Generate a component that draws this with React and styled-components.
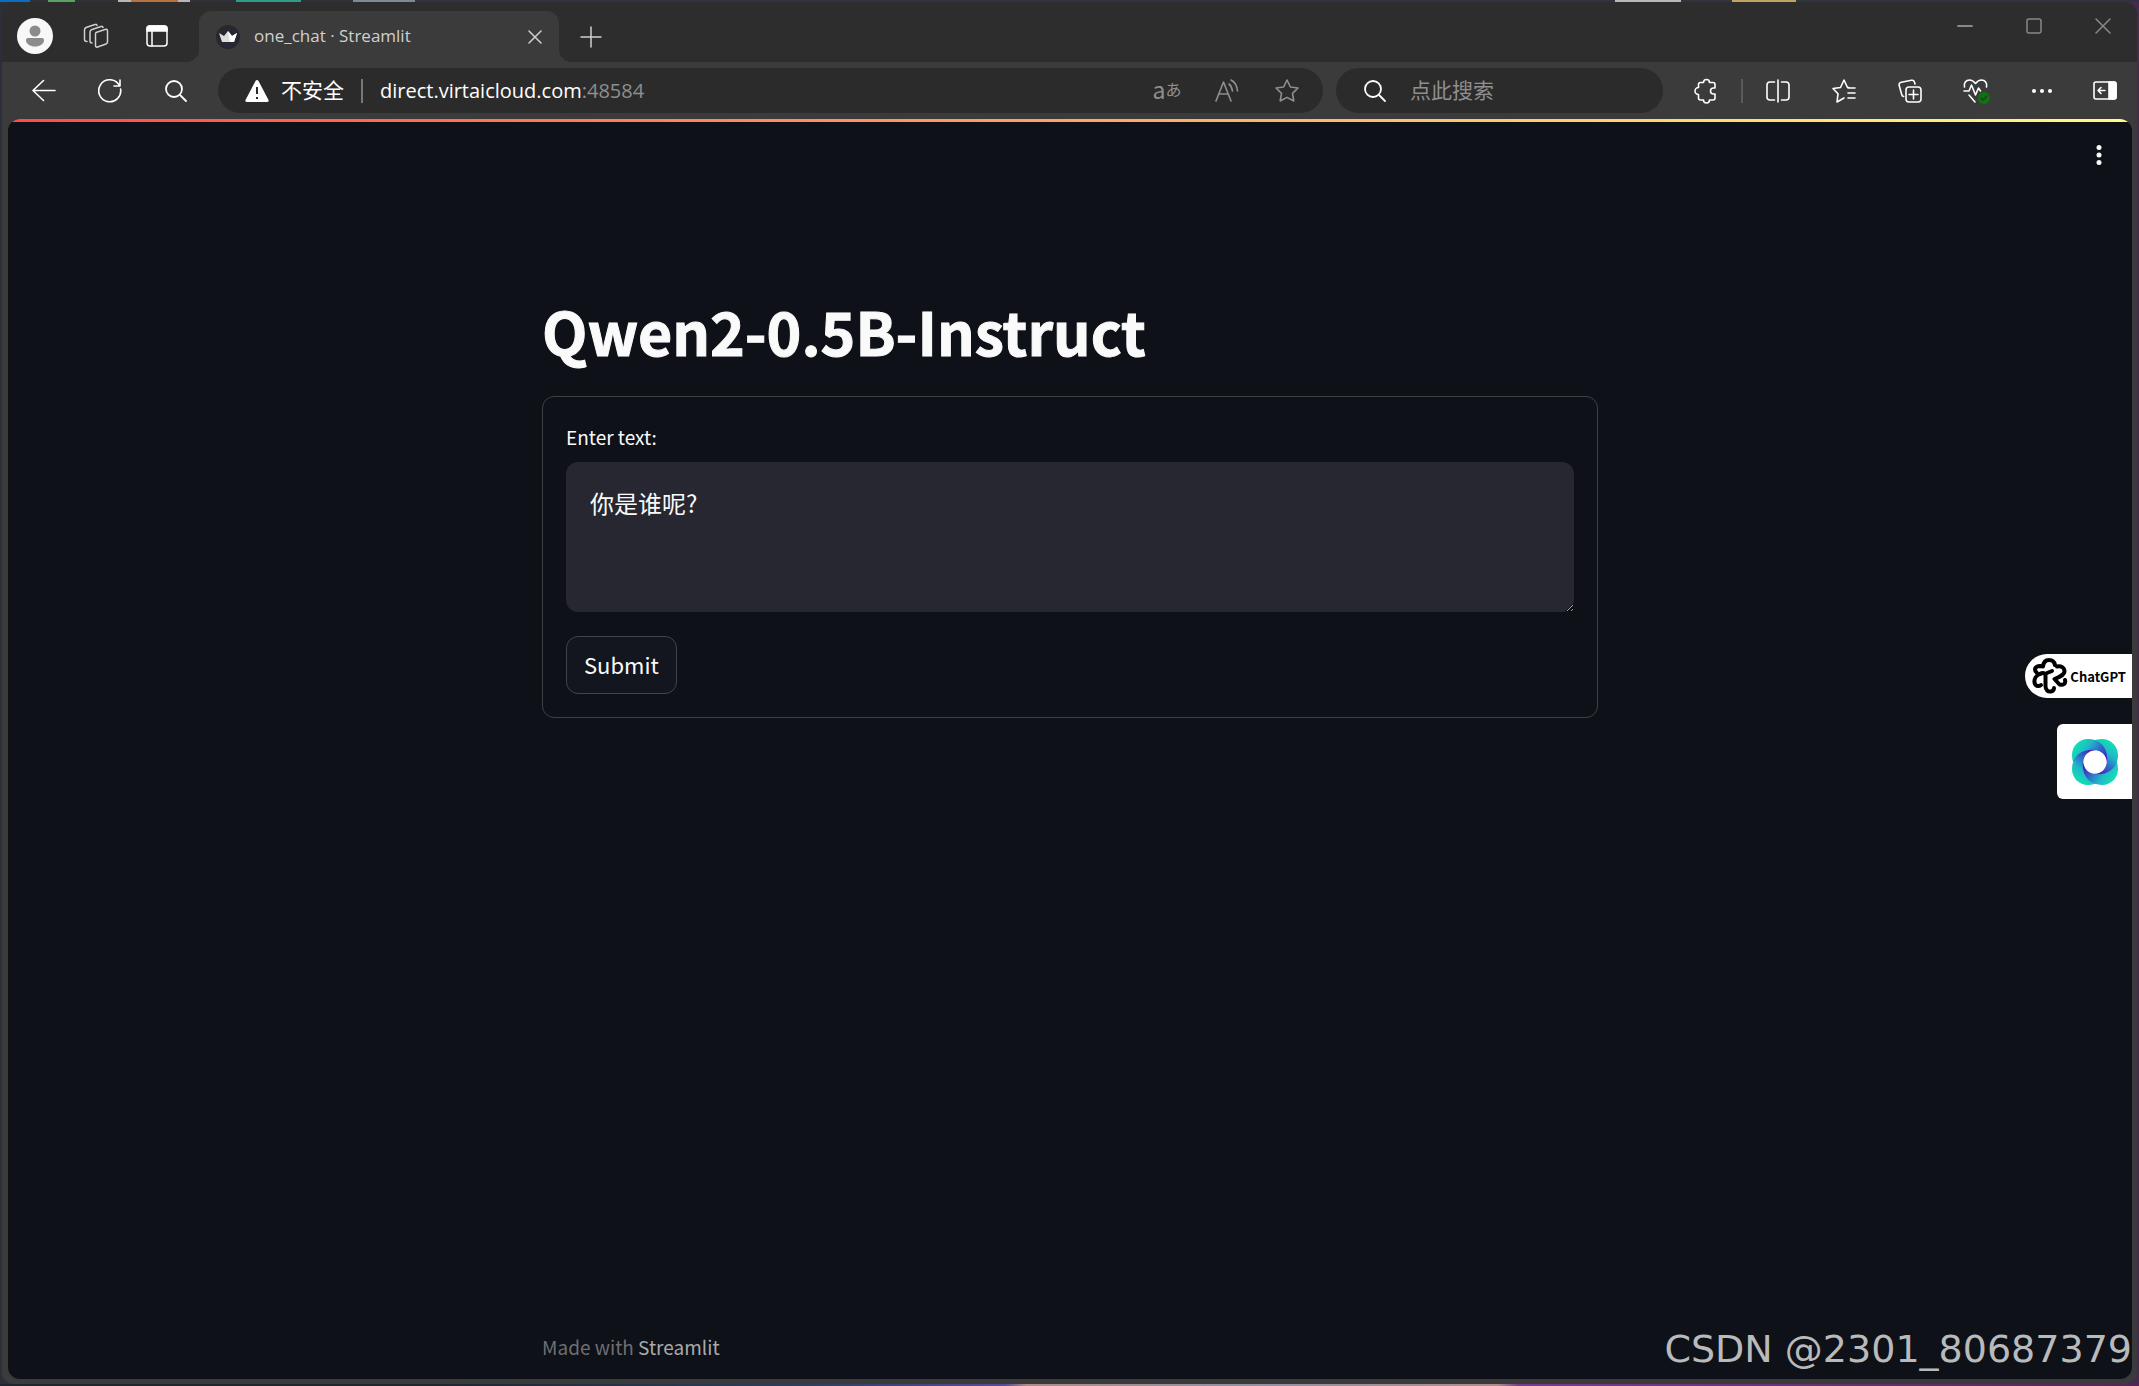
import React, { useState } from "react";
import styled, { createGlobalStyle } from "styled-components";

const ui = `"Open Sans", "Noto Sans CJK SC", sans-serif`;
const source = `"Noto Sans CJK SC", sans-serif`;

const GlobalStyle = createGlobalStyle`
  * {
    box-sizing: border-box;
  }
  body {
    margin: 0;
    background: #2b3038;
    font-family: ${ui};
  }
  button {
    font: inherit;
    color: inherit;
    background: none;
    border: 0;
    padding: 0;
    cursor: pointer;
  }
  svg {
    display: block;
  }
`;

const Desktop = styled.div`
  min-height: 100vh;
  padding: 2px;
  display: flex;
  background:
    linear-gradient(
        90deg,
        #0a6fc0 0 30px,
        #2d3138 30px 48px,
        #5ba45f 48px 75px,
        #2d3138 75px 118px,
        #b7b7b7 118px 131px,
        #b8713f 131px 178px,
        #b7b7b7 178px 190px,
        #2d3138 190px 236px,
        #2c9f86 236px 301px,
        #2d3138 301px 353px,
        #7d8b92 353px 415px,
        #30343c 415px 1615px,
        #b8b8b8 1615px 1681px,
        #30343c 1681px 1732px,
        #c0a262 1732px 1796px,
        #30343c 1796px
      )
      top / 100% 2px no-repeat,
    linear-gradient(
        90deg,
        #20262f 20%,
        #2d3d66 38%,
        #5a4a9a 47%,
        #b08a8a 48%,
        #9290a6 58%,
        #b08a90 70%,
        #7a3a92 71%,
        #5a2158
      )
      bottom / 100% 2px no-repeat,
    linear-gradient(90deg, #2b3038 50%, #472a50 50%);
`;
const Window = styled.div`
  flex: 1;
  display: flex;
  flex-direction: column;
  background: #3b3b3b;
  border-radius: 12px;
  overflow: hidden;
`;

const TabStrip = styled.div`
  display: flex;
  align-items: flex-end;
  height: 60px;
  background: #2d2d2d;
  color: #d0d0d0;
`;
const StripTools = styled.div`
  display: flex;
  align-items: center;
  gap: 23px;
  height: 52px;
  width: 197px;
  padding-left: 14px;
`;
const StripButton = styled.button`
  display: grid;
  place-items: center;
  width: 38px;
  height: 38px;
`;
const Tab = styled.div`
  position: relative;
  display: flex;
  align-items: center;
  width: 360px;
  height: 51px;
  padding: 0 14px 0 17px;
  background: #3b3b3b;
  border-radius: 12px 12px 0 0;
  font-size: 17px;
  &::before,
  &::after {
    content: "";
    position: absolute;
    bottom: 0;
    width: 12px;
    height: 12px;
  }
  &::before {
    right: 100%;
    background: radial-gradient(circle at 0 0, transparent 12px, #3b3b3b 12px);
  }
  &::after {
    left: 100%;
    background: radial-gradient(circle at 100% 0, transparent 12px, #3b3b3b 12px);
  }
`;
const TabTitle = styled.span`
  flex: 1;
  margin-left: 14px;
  padding-bottom: 2px;
`;
const TabButton = styled.button`
  display: grid;
  place-items: center;
  width: 20px;
  height: 30px;
`;
const NewTab = styled(TabButton)`
  height: 51px;
  margin-left: 21px;
`;
const WindowControls = styled.div`
  display: flex;
  align-self: flex-start;
  margin-left: auto;
  color: #888;
`;
const WindowButton = styled.button`
  display: grid;
  place-items: center;
  width: 69px;
  height: 48px;
`;

const Toolbar = styled.div`
  display: flex;
  align-items: center;
  height: 57px;
  padding: 0 2px 0 9px;
  color: #fff;
`;
const ToolButton = styled.button`
  display: grid;
  place-items: center;
  flex: none;
  width: ${({ $narrow }) => ($narrow ? 60 : 66)}px;
  height: 45px;
`;
const Field = styled.div`
  display: flex;
  align-items: center;
  height: 45px;
  background: #2b2b2b;
  border-radius: 23px;
  font-size: 20px;
`;
const AddressBar = styled(Field)`
  flex: 1;
  margin-left: 9px;
  padding: 0 6px 0 27px;
`;
const Security = styled.button`
  display: flex;
  align-items: center;
  gap: 12px;
  font-size: 21px;
  span {
    padding-bottom: 3px;
  }
`;
const Divider = styled.span`
  width: 2px;
  height: 24px;
  background: ${({ $color }) => $color};
  margin: 0 ${({ $gap }) => $gap}px;
`;
const Url = styled.div`
  flex: 1;
  padding-bottom: 1px;
  span {
    color: #8f8f8f;
  }
`;
const FieldTools = styled.div`
  display: flex;
  color: #8f8f8f;
`;
const FieldButton = styled.button`
  display: grid;
  place-items: center;
  width: 60px;
  height: 45px;
`;
const Glyph = styled.span`
  font: ${({ $size }) => $size}px/24px ${source};
`;
const TranslateLabel = styled.span`
  display: flex;
  align-items: center;
  padding-bottom: 3px;
`;
const SearchBox = styled(Field)`
  width: 327px;
  margin: 0 10px 0 13px;
  padding: 0 27px;
  gap: 23px;
  input {
    flex: 1;
    min-width: 0;
    padding: 0 0 2px;
    border: 0;
    outline: 0;
    background: none;
    color: #fff;
    font: 21px ${ui};
  }
  input::placeholder {
    color: #8f8f8f;
    opacity: 1;
  }
`;

const Page = styled.main`
  position: relative;
  flex: 1;
  display: flex;
  flex-direction: column;
  margin: 0 5px 5px 6px;
  background: #0e1117;
  color: #fafafa;
  border-radius: 12px;
  overflow: hidden;
  font-family: ${source};
`;
const Decoration = styled.div`
  height: 3px;
  background: linear-gradient(90deg, #ff4b4b, #fffd80);
`;
const Header = styled.header`
  display: flex;
  justify-content: flex-end;
  padding: 18px 18px 0;
`;
const MenuButton = styled.button`
  display: grid;
  place-items: center;
  width: 30px;
  height: 30px;
`;
const Content = styled.section`
  flex: 1;
  width: 100%;
  max-width: 1056px;
  margin: 0 auto;
  padding-top: 121px;
`;
const Title = styled.h1`
  margin: 0;
  font-size: 59px;
  line-height: 80px;
  font-weight: 700;
  -webkit-text-stroke: 1px currentColor;
`;
const Form = styled.form`
  margin-top: 25px;
  padding: 23px;
  border: 1px solid #3d4045;
  border-radius: 12px;
  display: flex;
  flex-direction: column;
  align-items: flex-start;
`;
const Label = styled.label`
  font-size: 19px;
  line-height: 34px;
  margin-bottom: 8px;
`;
const TextArea = styled.textarea`
  width: 100%;
  height: 150px;
  padding: 24px;
  border: 0;
  outline: 0;
  border-radius: 12px;
  background: #262730;
  color: #fafafa;
  font: 24px/34px ${source};
  resize: vertical;
  color-scheme: dark;
`;
const Submit = styled.button`
  height: 58px;
  margin-top: 24px;
  padding: 0 17px 3px;
  border: 1px solid #41444a;
  border-radius: 12px;
  background: #13161e;
  font-size: 22px;
`;
const Footer = styled.footer`
  width: 100%;
  max-width: 1056px;
  margin: 0 auto;
  padding-bottom: 18px;
  color: #6d6e73;
  font-size: 19px;
  line-height: 28px;
  a {
    color: #a9aaad;
    text-decoration: none;
  }
`;

const Widgets = styled.aside`
  position: absolute;
  right: 0;
  top: 535px;
  display: flex;
  flex-direction: column;
  align-items: flex-end;
  gap: 26px;
`;
const ChatWidget = styled.button`
  display: flex;
  align-items: center;
  gap: 2px;
  height: 44px;
  padding: 0 6px 0 7px;
  background: #fff;
  color: #000;
  border-radius: 22px 0 0 22px;
  font-size: 13px;
  font-weight: 700;
`;
const LogoWidget = styled.button`
  display: grid;
  place-items: center;
  width: 75px;
  height: 75px;
  background: #fff;
  border-radius: 6px 0 0 6px;
`;
const Watermark = styled.div`
  position: absolute;
  right: 0;
  bottom: 6px;
  color: #b9babb;
  font: 38px/48px "DejaVu Sans", sans-serif;
  white-space: nowrap;
`;

function Icon({ size = 24, width = 2, children, ...rest }) {
  return (
    <svg
      width={size}
      height={size}
      viewBox={`0 0 ${size} ${size}`}
      fill="none"
      stroke="currentColor"
      strokeWidth={width}
      strokeLinecap="round"
      strokeLinejoin="round"
      aria-hidden="true"
      {...rest}
    >
      {children}
    </svg>
  );
}

function SearchIcon() {
  return (
    <Icon width={1.8}>
      <circle cx="10" cy="10" r="8" />
      <path d="M16 16l6 6" />
    </Icon>
  );
}

function ChatLogo() {
  return (
    <Icon size={36} width={4}>
      <path d="M5 15C1.500 12 3 8 8 8l3 .5C11.500 4 14 2 17 2c3.500 0 5.500 2.500 6 5" />
      <path d="M25 8.500c4-1 7.500 1 7.500 5 0 3-3 4.500-10 7.500l5 5.500c4 1 6.500-1 5.500-4.500" />
      <path d="M8 16c3-2 5.500-1 5.500 2v10c0 4 2.500 6 5.500 5.500 2-.5 3-2 3-3.500" />
      <path d="M8 16c-4 1.500-6 5-5.500 8.500.5 3.500 4 4.500 6.500 2.500" />
      <path d="M20 13l-5 2" />
    </Icon>
  );
}

const petal =
  "M0 16C0 7 7 0 16 0c12 0 21 9 19 24-1-7-6-12.500-12-12.500C13 11.500 5 18 3 27 1 24 0 20 0 16z";

function RingLogo() {
  return (
    <svg width="46" height="46" viewBox="0 0 46 46" aria-hidden="true">
      <defs>
        <linearGradient
          id="ring"
          gradientUnits="userSpaceOnUse"
          x1="6"
          y1="2"
          x2="34"
          y2="20"
        >
          <stop offset="0" stopColor="#12dfb5" />
          <stop offset="0.350" stopColor="#1fb9c8" />
          <stop offset="0.650" stopColor="#2f70c8" />
          <stop offset="1" stopColor="#4b1cc0" />
        </linearGradient>
        <clipPath id="upper">
          <path d="M0 0h46v23H0z" />
        </clipPath>
      </defs>
      {[270, 180, 90, 0].map((turn) => (
        <path
          key={turn}
          transform={`rotate(${turn} 23 23)`}
          fill="url(#ring)"
          d={petal}
        />
      ))}
      <g clipPath="url(#upper)">
        <path transform="rotate(270 23 23)" fill="url(#ring)" d={petal} />
      </g>
      <circle cx="23" cy="23" r="11.500" fill="#fff" />
    </svg>
  );
}

function BrowserTabs() {
  return (
    <TabStrip>
      <StripTools>
        <StripButton aria-label="Profile">
          <svg width="36" height="36" viewBox="0 0 36 36">
            <circle cx="18" cy="18" r="18" fill="#f8f8f8" />
            <circle cx="18" cy="13" r="5.500" fill="#8c8c8c" />
            <path d="M11 20h14c1.500 0 2 1 2 2 0 4-4 6.500-9 6.500S9 26 9 22c0-1 .5-2 2-2z" fill="#8c8c8c" />
          </svg>
        </StripButton>
        <StripButton aria-label="Workspaces">
          <Icon size={26} width={1.5}>
            <path d="M13 9.500l9-3c1.500-.5 2.500 0 2.500 1.500v11c0 1-.5 1.500-1.500 2l-8.500 3c-1.200.4-2-.1-2-1.500V11.500c0-1 .2-1.700.5-2z" />
            <path d="M9 20c-1.500 0-2-.5-2-2V9c0-1.500.5-2 2-2.500l9-3c1-.3 2 0 2 1" />
            <path d="M4 18.500c-2 0-2.500-.5-2.500-2V7C1.500 5.500 2 5 3 4.500l9-3c1-.3 2 0 2 1" />
          </Icon>
        </StripButton>
        <StripButton aria-label="Tab actions">
          <Icon size={24} width={1.5} color="#fff">
            <rect x="2" y="2" width="20" height="20" rx="3" />
            <path d="M2 4.500C2 3 3 2 4.500 2h15C21 2 22 3 22 4.500V7H2z" fill="currentColor" />
            <path d="M7 7v15" />
          </Icon>
        </StripButton>
      </StripTools>
      <Tab>
        <svg width="24" height="24" viewBox="0 0 24 24" aria-hidden="true">
          <circle cx="12" cy="12" r="12" fill="#262730" />
          <path d="M3 8l5 3 4-5 4 5 5-3-3 9H6z" fill="#ddd" />
          <path d="M12 6l4 5 5-3-3 9h-4z" fill="#fff" />
        </svg>
        <TabTitle>one_chat · Streamlit</TabTitle>
        <TabButton aria-label="Close tab">
          <Icon size={14} width={1.5}>
            <path d="M1 1l12 12M13 1L1 13" />
          </Icon>
        </TabButton>
      </Tab>
      <NewTab aria-label="New tab">
        <Icon size={22} width={1.5}>
          <path d="M11 1v20M1 11h20" />
        </Icon>
      </NewTab>
      <WindowControls>
        <WindowButton aria-label="Minimize">
          <Icon size={16}>
            <path d="M1 8h14" />
          </Icon>
        </WindowButton>
        <WindowButton aria-label="Maximize">
          <Icon size={16} width={1.5}>
            <rect x="1" y="1" width="14" height="14" rx="2" />
          </Icon>
        </WindowButton>
        <WindowButton aria-label="Close">
          <Icon size={16} width={1.5}>
            <path d="M1 1l14 14M15 1L1 15" />
          </Icon>
        </WindowButton>
      </WindowControls>
    </TabStrip>
  );
}

function BrowserToolbar() {
  return (
    <Toolbar>
      <ToolButton aria-label="Back">
        <Icon width={1.6}>
          <path d="M23 11.500H1M11.500 1.500l-10.500 10 10.500 10" />
        </Icon>
      </ToolButton>
      <ToolButton aria-label="Refresh">
        <Icon width={1.6}>
          <path d="M22.600 10A11 11 0 1 1 20 4.500L22 7M22 1v6h-6" />
        </Icon>
      </ToolButton>
      <ToolButton aria-label="Search">
        <SearchIcon />
      </ToolButton>
      <AddressBar>
        <Security>
          <svg width="24" height="24" viewBox="0 0 24 24" aria-hidden="true">
            <path d="M10.500 2c.7-1.200 2.300-1.200 3 0l10 19c.5 1.200 0 2-1.200 2H1.700C.5 23 0 22.200.5 21z" fill="#fff" />
            <path d="M12 8v7M12 18v2" stroke="#2b2b2b" strokeWidth="2" />
          </svg>
          <span>不安全</span>
        </Security>
        <Divider $color="#777" $gap={17} />
        <Url>
          direct.virtaicloud.com<span>:48584</span>
        </Url>
        <FieldTools>
          <FieldButton aria-label="Translate">
            <TranslateLabel>
              <Glyph $size={23}>a</Glyph>
              <Glyph $size={16}>あ</Glyph>
            </TranslateLabel>
          </FieldButton>
          <FieldButton aria-label="Read aloud">
            <Icon width={1.6}>
              <path d="M1 22L8.500 3 16 22M3.500 15h10M14 5c2 1.500 3 4 3.500 7M16 1c4 2 6 6 6.500 11" />
            </Icon>
          </FieldButton>
          <FieldButton aria-label="Add to favorites">
            <Icon size={26} width={1.6}>
              <path d="M13 2l3.400 7 7.600 1-5.500 5.300 1.300 7.700L13 19.400 6.200 23l1.300-7.700L2 10l7.600-1z" />
            </Icon>
          </FieldButton>
        </FieldTools>
      </AddressBar>
      <SearchBox as="label">
        <SearchIcon />
        <input type="search" placeholder="点此搜索" aria-label="点此搜索" />
      </SearchBox>
      <ToolButton aria-label="Extensions">
        <Icon size={26} width={1.6}>
          <path d="M7.500 4.500h3a3 3 0 0 1 6 0h3.500c1.200 0 2 .8 2 2V10h-1.500a3 3 0 0 0 0 6H22v4c0 1.200-.8 2-2 2h-3.500a3 3 0 0 1-6 0h-3c-1.200 0-2-.8-2-2v-3.500a3.500 3.500 0 0 1 0-7v-3c0-1.200.8-2 2-2z" />
        </Icon>
      </ToolButton>
      <Divider $color="#5a5a5a" $gap={2} />
      <ToolButton aria-label="Split screen">
        <Icon width={1.6}>
          <path d="M8.500 3H4C2.500 3 1 4 1 6v12c0 2 1.500 3 3 3h4.500M15.500 3H20c1.500 0 3 1 3 3v12c0 2-1.500 3-3 3h-4.500M12 1v22" />
        </Icon>
      </ToolButton>
      <ToolButton aria-label="Favorites">
        <Icon width={1.6}>
          <path d="M17 8.500h-1.500L12 1 8.500 8.500 1 9.500l5 5.300L5 23l7-4M16 9h7M16 14h7M16 19h7" />
        </Icon>
      </ToolButton>
      <ToolButton aria-label="Collections">
        <Icon width={1.6}>
          <rect x="8" y="8" width="15" height="15" rx="3" />
          <path d="M15.500 11v9M11 15.500h9M17 5l-.6-2c-.4-1.500-1.500-2-3-1.700l-10 2C1.500 3.800.8 5 1.200 6.500l2.500 9c.3 1.200 1 2 2 2" />
        </Icon>
      </ToolButton>
      <ToolButton aria-label="Browser essentials">
        <Icon size={28} width={1.6}>
          <path d="M2.500 10C1.500 6 4 3 7.500 3c2.500 0 4.500 1.500 6 3.500C15 4.500 17 3 19.500 3c3.500 0 6 3 5 7M2 14h5l2.500-6 4 10 3-7 2 3M7 18l6 7" />
          <circle cx="22" cy="21" r="6" fill="#0b750e" stroke="none" />
          <path d="M19 21l2 2 4-4" stroke="#333" />
        </Icon>
      </ToolButton>
      <ToolButton aria-label="Settings and more">
        <Icon fill="currentColor" stroke="none">
          <circle cx="4" cy="12" r="2" />
          <circle cx="12" cy="12" r="2" />
          <circle cx="20" cy="12" r="2" />
        </Icon>
      </ToolButton>
      <ToolButton $narrow aria-label="Sidebar">
        <Icon width={1.6}>
          <rect x="1" y="3" width="22" height="17" rx="2" />
          <path d="M16 3h5c1 0 2 1 2 2v13c0 1-1 2-2 2h-5z" fill="currentColor" />
          <path d="M12 11.500H5M8 8.500l-3 3 3 3" />
        </Icon>
      </ToolButton>
    </Toolbar>
  );
}

export default function App() {
  const [text, setText] = useState("你是谁呢?");

  return (
    <Desktop>
      <GlobalStyle />
      <Window>
        <BrowserTabs />
        <BrowserToolbar />
        <Page>
          <Decoration />
          <Header>
            <MenuButton aria-label="Main menu">
              <Icon size={22} fill="currentColor" stroke="none">
                <circle cx="11" cy="3.500" r="2.500" />
                <circle cx="11" cy="11" r="2.500" />
                <circle cx="11" cy="18.500" r="2.500" />
              </Icon>
            </MenuButton>
          </Header>
          <Content>
            <Title>Qwen2-0.5B-Instruct</Title>
            <Form onSubmit={(event) => event.preventDefault()}>
              <Label htmlFor="prompt">Enter text:</Label>
              <TextArea
                id="prompt"
                value={text}
                onChange={(event) => setText(event.target.value)}
              />
              <Submit type="submit">Submit</Submit>
            </Form>
          </Content>
          <Footer>
            Made with <a href="#streamlit">Streamlit</a>
          </Footer>
          <Widgets>
            <ChatWidget>
              <ChatLogo />
              ChatGPT
            </ChatWidget>
            <LogoWidget aria-label="Assistant">
              <RingLogo />
            </LogoWidget>
          </Widgets>
          <Watermark>CSDN @2301_80687379</Watermark>
        </Page>
      </Window>
    </Desktop>
  );
}
